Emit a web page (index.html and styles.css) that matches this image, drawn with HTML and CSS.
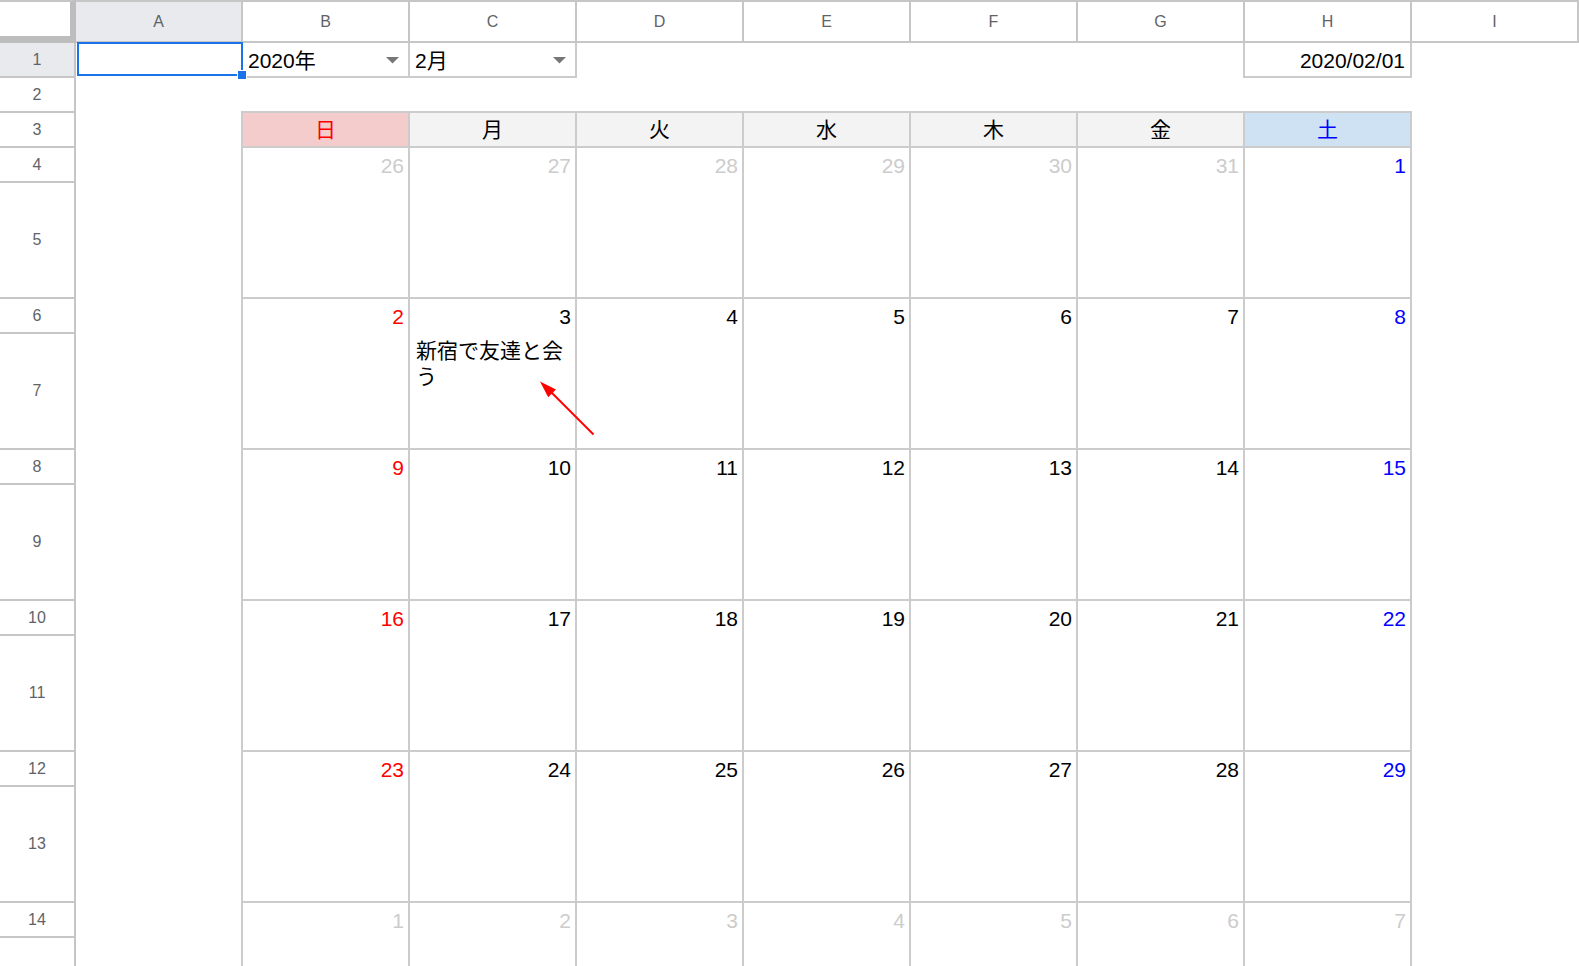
FILE: index.html
```html
<!DOCTYPE html>
<html lang="ja">
<head>
<meta charset="utf-8">
<title>カレンダー</title>
<link rel="stylesheet" href="styles.css">
</head>
<body>
<div class="app">
  <div class="colheads">
    <div class="corner"></div>
    <div class="ch active">A</div>
    <div class="ch">B</div>
    <div class="ch">C</div>
    <div class="ch">D</div>
    <div class="ch">E</div>
    <div class="ch">F</div>
    <div class="ch">G</div>
    <div class="ch">H</div>
    <div class="ch">I</div>
  </div>
  <div class="main">
    <div class="rowheads">
      <div class="rh active">1</div>
      <div class="rh">2</div>
      <div class="rh">3</div>
      <div class="rh">4</div>
      <div class="rh tall">5</div>
      <div class="rh">6</div>
      <div class="rh tall">7</div>
      <div class="rh">8</div>
      <div class="rh tall">9</div>
      <div class="rh">10</div>
      <div class="rh tall">11</div>
      <div class="rh">12</div>
      <div class="rh tall">13</div>
      <div class="rh">14</div>
      <div class="rh tall"></div>
    </div>
    <div class="cells">
      <div class="sel"><div class="handle"></div></div>
      <div class="dd dd-year"><span>2020年</span><svg class="caret" width="13" height="7" viewBox="0 0 13 7"><polygon points="0,0 13,0 6.5,6.5" fill="#777"/></svg></div>
      <div class="dd dd-month"><span>2月</span><svg class="caret" width="13" height="7" viewBox="0 0 13 7"><polygon points="0,0 13,0 6.5,6.5" fill="#777"/></svg></div>
      <div class="datecell">2020/02/01</div>
      <div class="cal">
        <div class="wd sun">日</div>
        <div class="wd">月</div>
        <div class="wd">火</div>
        <div class="wd">水</div>
        <div class="wd">木</div>
        <div class="wd">金</div>
        <div class="wd sat">土</div>

        <div class="day other"><div class="num">26</div></div>
        <div class="day other"><div class="num">27</div></div>
        <div class="day other"><div class="num">28</div></div>
        <div class="day other"><div class="num">29</div></div>
        <div class="day other"><div class="num">30</div></div>
        <div class="day other"><div class="num">31</div></div>
        <div class="day sat"><div class="num">1</div></div>

        <div class="day sun"><div class="num">2</div></div>
        <div class="day"><div class="num">3</div><div class="ev">新宿で友達と会う</div></div>
        <div class="day"><div class="num">4</div></div>
        <div class="day"><div class="num">5</div></div>
        <div class="day"><div class="num">6</div></div>
        <div class="day"><div class="num">7</div></div>
        <div class="day sat"><div class="num">8</div></div>

        <div class="day sun"><div class="num">9</div></div>
        <div class="day"><div class="num">10</div></div>
        <div class="day"><div class="num">11</div></div>
        <div class="day"><div class="num">12</div></div>
        <div class="day"><div class="num">13</div></div>
        <div class="day"><div class="num">14</div></div>
        <div class="day sat"><div class="num">15</div></div>

        <div class="day sun"><div class="num">16</div></div>
        <div class="day"><div class="num">17</div></div>
        <div class="day"><div class="num">18</div></div>
        <div class="day"><div class="num">19</div></div>
        <div class="day"><div class="num">20</div></div>
        <div class="day"><div class="num">21</div></div>
        <div class="day sat"><div class="num">22</div></div>

        <div class="day sun"><div class="num">23</div></div>
        <div class="day"><div class="num">24</div></div>
        <div class="day"><div class="num">25</div></div>
        <div class="day"><div class="num">26</div></div>
        <div class="day"><div class="num">27</div></div>
        <div class="day"><div class="num">28</div></div>
        <div class="day sat"><div class="num">29</div></div>

        <div class="day other"><div class="num">1</div></div>
        <div class="day other"><div class="num">2</div></div>
        <div class="day other"><div class="num">3</div></div>
        <div class="day other"><div class="num">4</div></div>
        <div class="day other"><div class="num">5</div></div>
        <div class="day other"><div class="num">6</div></div>
        <div class="day other"><div class="num">7</div></div>
      </div>
    </div>
  </div>
  <svg class="arrow" width="1579" height="966" viewBox="0 0 1579 966">
    <line x1="593.5" y1="434.5" x2="550" y2="391" stroke="#ff0000" stroke-width="2"/>
    <polygon points="540,381.5 556,389.5 548.2,397.3" fill="#ff0000"/>
  </svg>
</div>
</body>
</html>
```

FILE: styles.css
```css
* { box-sizing: border-box; }

html, body {
  margin: 0;
  padding: 0;
  background: #fff;
}

body {
  width: 1579px;
  height: 966px;
  overflow: hidden;
  font-family: "Liberation Sans", Arial, "Noto Sans CJK JP", sans-serif;
  color: #000;
}

.app {
  position: relative;
}

/* column header bar */
.colheads {
  display: flex;
  height: 43px;
}

.corner {
  flex: none;
  width: 76px;
  border-top: 2px solid #c6c6c6;
  border-right: 6px solid #bdbdbd;
  border-bottom: 7px solid #bdbdbd;
  background: #fff;
}

.ch {
  flex: none;
  width: 167px;
  border-top: 2px solid #c6c6c6;
  border-right: 2px solid #c6c6c6;
  border-bottom: 2px solid #c6c6c6;
  display: flex;
  align-items: center;
  justify-content: center;
  font-size: 16px;
  color: #5f6368;
  background: #fff;
}

.ch.active { background: #e8eaed; }

/* body */
.main {
  display: flex;
}

.rowheads {
  flex: none;
  width: 76px;
  display: flex;
  flex-direction: column;
}

.rh {
  flex: none;
  height: 35px;
  border-right: 2px solid #c6c6c6;
  border-bottom: 2px solid #c6c6c6;
  display: flex;
  align-items: center;
  justify-content: center;
  font-size: 16px;
  color: #5f6368;
}

.rh.tall { height: 116px; }
.rh.active { background: #e8eaed; }

.cells {
  display: grid;
  grid-template-columns: repeat(9, 167px);
  grid-template-rows: 35px 35px 35px 35px 116px 35px 116px 35px 116px 35px 116px 35px 116px 35px 116px;
}

/* selected A1 */
.sel {
  grid-area: 1 / 1;
  margin: -1px 0 2px 1px;
  border: 2px solid #1a73e8;
  position: relative;
}

.handle {
  position: absolute;
  right: -6px;
  bottom: -6px;
  width: 10px;
  height: 10px;
  background: #1a73e8;
  border: 1px solid #fff;
}

/* dropdown cells */
.dd {
  display: flex;
  align-items: flex-start;
  justify-content: space-between;
  border-right: 2px solid #cccccc;
  border-bottom: 2px solid #cccccc;
  padding: 1px 9px 0 5px;
  font-size: 21px;
  line-height: 33px;
}

.dd-year { grid-area: 1 / 2; }
.dd-month { grid-area: 1 / 3; }

.caret {
  flex: none;
  margin-top: 13px;
}

.datecell {
  grid-area: 1 / 8;
  margin-left: -2px;
  border-left: 2px solid #cccccc;
  border-right: 2px solid #cccccc;
  border-bottom: 2px solid #cccccc;
  padding: 1px 5px 0 0;
  text-align: right;
  font-size: 21px;
  line-height: 33px;
}

/* calendar */
.cal {
  grid-column: 2 / 9;
  grid-row: 3 / 16;
  margin: -2px 0 0 -2px;
  border-left: 2px solid #cccccc;
  border-top: 2px solid #cccccc;
  display: grid;
  grid-template-columns: repeat(7, 167px);
  grid-template-rows: 35px repeat(6, 151px);
}

.wd {
  border-right: 2px solid #cccccc;
  border-bottom: 2px solid #cccccc;
  background: #f3f3f3;
  text-align: center;
  font-size: 21px;
  line-height: 33px;
}

.wd.sun { background: #f4cccc; color: #ff0000; }
.wd.sat { background: #cfe2f3; color: #0000ff; }

.day {
  border-right: 2px solid #cccccc;
  border-bottom: 2px solid #cccccc;
}

.num {
  height: 35px;
  padding: 1px 4px 0 0;
  text-align: right;
  font-size: 21px;
  line-height: 33px;
}

.day.other .num { color: #cccccc; }
.day.sun .num { color: #ff0000; }
.day.sat .num { color: #0000ff; }

.ev {
  padding: 2px 3px 0 6px;
  font-family: "Noto Sans CJK JP", sans-serif;
  font-size: 21px;
  line-height: 26px;
}

.arrow {
  position: absolute;
  left: 0;
  top: 0;
  pointer-events: none;
}
```
